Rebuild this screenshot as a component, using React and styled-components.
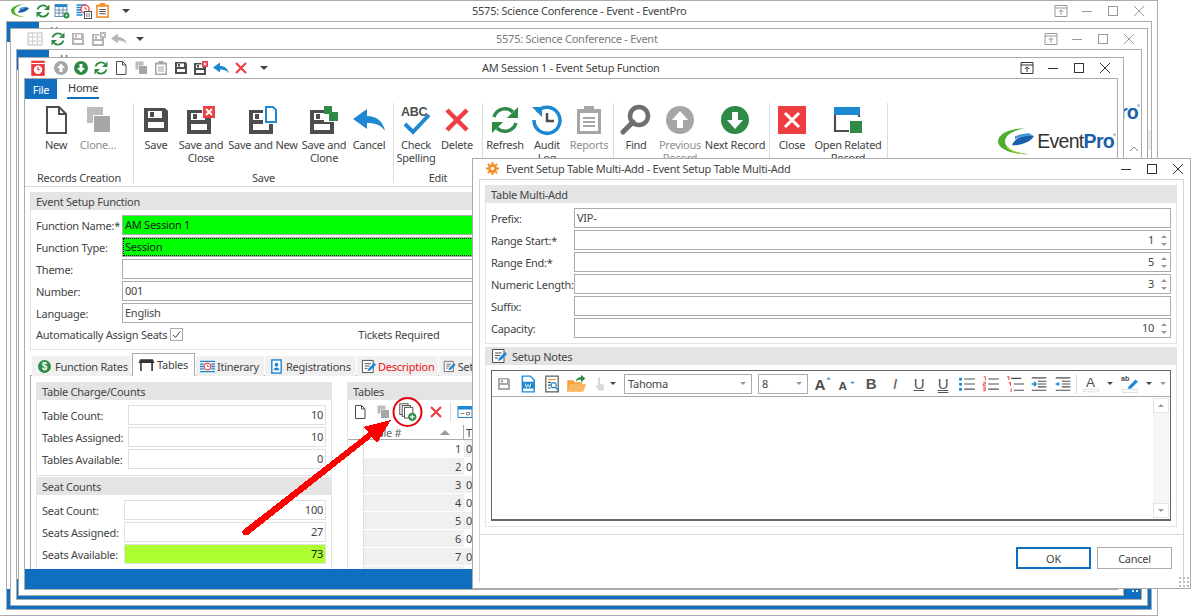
import React from 'react';
import styled, { createGlobalStyle } from 'styled-components';

const BLUE = '#106ebe';
const ICON_BLUE = '#1e88d2';
const GREEN = '#2e8b45';
const RED = '#ef3e42';
const DARK = '#4d4d4d';
const GREY = '#a6a6a6';

const GlobalStyle = createGlobalStyle`
    html, body {
        margin: 0;
        padding: 0;
        background: #fff;
        overflow: hidden;
    }
    body {
        font-family: "Noto Sans", "Open Sans", sans-serif;
        font-size: 11px;
        letter-spacing: -0.25px;
        color: #444;
    }
`;

const Desktop = styled.div`
    position: relative;
    width: 1191px;
    height: 616px;
    overflow: hidden;
    background: #fff;
`;

const Window = styled.section`
    position: absolute;
    left: ${(p) => p.$left}px;
    top: ${(p) => p.$top}px;
    width: ${(p) => p.$width}px;
    height: ${(p) => p.$height}px;
    box-sizing: border-box;
    display: flex;
    flex-direction: column;
    padding: 0 5px 5px ${(p) => p.$padLeft || 5}px;
    background: #fff;
    border: 1px solid #ababab;
`;

const TitleBar = styled.header`
    flex: none;
    box-sizing: border-box;
    height: 20px;
    padding-bottom: 1px;
    display: flex;
    align-items: center;
    color: ${(p) => (p.$dim ? '#7a7a7a' : '#444')};
`;

const Qat = styled.div`
    display: flex;
    align-items: center;
    margin-left: ${(p) => p.$pad}px;
`;

const QatSlot = styled.span`
    flex: none;
    width: 20px;
    height: 20px;
    display: flex;
    align-items: center;
    justify-content: center;
    margin-left: ${(p) => p.$ml || 0}px;
`;

const Caret = styled.span`
    flex: none;
    width: 0;
    height: 0;
    border-left: ${(p) => p.$size || 4}px solid transparent;
    border-right: ${(p) => p.$size || 4}px solid transparent;
    border-top: ${(p) => p.$size || 4}px solid ${(p) => p.$color || '#444'};
`;

const TitleText = styled.span`
    margin-left: ${(p) => p.$ml}px;
    white-space: nowrap;
`;

const WinButtons = styled.div`
    margin-left: auto;
    margin-right: ${(p) => p.$mr || 0}px;
    display: flex;
    align-items: center;
`;

const WinButton = styled.span`
    width: 26px;
    height: 20px;
    display: flex;
    align-items: center;
    justify-content: center;
`;

const Frame = styled.div`
    flex: 1;
    min-height: 0;
    display: flex;
    flex-direction: column;
    border: 1px solid #ababab;
    background: #fff;
`;

const TabStrip = styled.div`
    flex: none;
    height: 20px;
    display: flex;
    align-items: stretch;
`;

const FileTab = styled.span`
    width: 32px;
    display: flex;
    align-items: center;
    justify-content: center;
    background: ${BLUE};
    color: #fff;
`;

const HomeTab = styled.span`
    margin-left: 10px;
    padding: 0 1px;
    line-height: 18px;
    border-bottom: 2px solid ${BLUE};
    color: #333;
`;

const Ribbon = styled.div`
    flex: none;
    height: 87px;
    display: flex;
    border-bottom: 1px solid #dcdcdc;
`;

const BackRibbon = styled.div`
    flex: 1;
    min-height: 0;
    display: flex;
    flex-direction: column;
    align-items: flex-end;
`;

const RibbonGroup = styled.div`
    box-sizing: border-box;
    flex: none;
    width: ${(p) => p.$width}px;
    height: 80px;
    margin-top: 4px;
    padding-left: ${(p) => p.$pad}px;
    display: flex;
    flex-direction: column;
    border-right: 1px solid #dcdcdc;
`;

const RibbonItems = styled.div`
    flex: 1;
    min-height: 0;
    display: flex;
`;

const RibbonItem = styled.div`
    flex: none;
    width: ${(p) => p.$width}px;
    display: flex;
    flex-direction: column;
    align-items: center;
    color: ${(p) => (p.$off ? '#8f8f8f' : '#444')};
`;

const RibbonIcon = styled.span`
    height: 32px;
    margin-top: 1px;
`;

const RibbonLabel = styled.span`
    margin-top: 2px;
    text-align: center;
    line-height: 13px;
`;

const GroupLabel = styled.div`
    text-align: center;
    line-height: 14px;
    margin-bottom: -2px;
    margin-left: ${(p) => -p.$pad}px;
    color: #444;
`;

const LogoBox = styled.div`
    flex: none;
    align-self: flex-start;
    display: flex;
    align-items: center;
    margin: 29px 3px 0 auto;
`;

const LogoWord = styled.span`
    position: relative;
    margin-left: 3px;
    font-family: "Liberation Sans", sans-serif;
    font-size: 19.5px;
    letter-spacing: -0.7px;
    color: #333;
    b {
        color: #1b5fa8;
    }
    i {
        position: absolute;
        right: -2px;
        top: 3px;
        width: 3px;
        height: 3px;
        border-radius: 50%;
        background: #a9c3de;
    }
`;

const ChevronUp = styled.span`
    margin: 20px 2px 0 0;
    line-height: 0;
`;

const ScrollStub = styled.span`
    margin-top: 88px;
    width: 5px;
    height: 20px;
    background: #ececec;
`;

const Body = styled.main`
    flex: 1;
    min-height: 0;
    overflow: hidden;
    padding: 5px 0 0 5px;
`;

const StatusBar = styled.footer`
    flex: none;
    height: 20px;
    display: flex;
    align-items: center;
    justify-content: flex-end;
    padding-right: 2px;
    background: ${BLUE};
`;

const Grip = styled.span`
    width: 8px;
    height: 8px;
    background-image: radial-gradient(#dcebf7 1px, transparent 1.2px);
    background-size: 4px 4px;
`;

const Group = styled.div`
    box-sizing: border-box;
    border: 1px solid #e4e4e4;
    border-top: none;
    margin-bottom: ${(p) => p.$mb || 0}px;
    height: ${(p) => (p.$height ? `${p.$height}px` : 'auto')};
`;

const GroupHeader = styled.div`
    height: 18px;
    margin: 0 -1px;
    padding-left: 6px;
    display: flex;
    align-items: center;
    gap: 5px;
    background: #e4e4e4;
`;

const Rows = styled.div`
    display: flex;
    flex-direction: column;
    gap: 2px;
    padding: 5px ${(p) => p.$right || 5}px 5px 5px;
`;

const Row = styled.div`
    display: flex;
    align-items: center;
    height: 20px;
`;

const FieldLabel = styled.label`
    flex: none;
    width: ${(p) => p.$width}px;
    white-space: nowrap;
`;

const Field = styled.div`
    position: relative;
    flex: 1;
    min-width: 0;
    height: 20px;
    box-sizing: border-box;
    padding: 0 ${(p) => (p.$spin ? 16 : 2)}px 0 2px;
    line-height: 18px;
    white-space: nowrap;
    text-align: ${(p) => (p.$right ? 'right' : 'left')};
    border: 1px solid ${(p) => (p.$soft ? '#e0e0e0' : '#ababab')};
    background: ${(p) => p.$bg || '#fff'};
    color: ${(p) => (p.$bg ? '#1a1a1a' : '#444')};
    ${(p) => p.$focus && 'outline: 1px dotted #000; outline-offset: -2px;'}
`;

const SpinBox = styled.span`
    position: absolute;
    right: 3px;
    top: 4px;
    display: flex;
    flex-direction: column;
    gap: 5px;
`;

const SpinArrow = styled.span`
    width: 0;
    height: 0;
    border-left: 3.5px solid transparent;
    border-right: 3.5px solid transparent;
    ${(p) => (p.$up ? 'border-bottom' : 'border-top')}: 3.5px solid #999;
`;

const CheckRow = styled.div`
    height: 18px;
    display: flex;
    align-items: center;
`;

const CheckBox = styled.span`
    width: 13px;
    height: 13px;
    margin-left: 3px;
    box-sizing: border-box;
    border: 1px solid #ababab;
    display: flex;
    align-items: center;
    justify-content: center;
`;

const TicketsLabel = styled.span`
    margin-left: 175px;
`;

const Tabs = styled.div`
    display: flex;
    align-items: flex-end;
    height: 23px;
    margin: 3px 0 -1px 2px;
    position: relative;
`;

const Tab = styled.span`
    flex: none;
    box-sizing: border-box;
    width: ${(p) => p.$width}px;
    height: ${(p) => (p.$active ? 23 : 20)}px;
    margin-right: 1px;
    display: flex;
    align-items: center;
    gap: ${(p) => p.$gap || 2}px;
    padding-left: ${(p) => p.$pad || 3}px;
    white-space: nowrap;
    overflow: hidden;
    color: ${(p) => (p.$alert ? '#ee1111' : '#444')};
    background: ${(p) => (p.$active ? '#fff' : '#f0f0f0')};
    border: 1px solid ${(p) => (p.$active ? '#ababab' : 'transparent')};
    border-bottom-color: ${(p) => (p.$active ? '#fff' : 'transparent')};
`;

const TabBody = styled.div`
    display: flex;
    align-items: flex-start;
    gap: 15px;
    height: 300px;
    padding: 6px 0 0 5px;
    border-top: 1px solid #ababab;
    border-left: 1px solid #ababab;
`;

const CountColumn = styled.div`
    flex: none;
    width: 296px;
`;

const TablesPane = styled.div`
    flex: 1;
    min-width: 0;
    border-left: 1px solid #e4e4e4;
`;

const GridTools = styled.div`
    box-sizing: border-box;
    height: 25px;
    display: flex;
    align-items: center;
    padding: 0 0 2px 1px;
`;

const ToolSlot = styled.span`
    flex: none;
    width: ${(p) => p.$width || 24}px;
    margin-left: ${(p) => p.$ml || 0}px;
    display: flex;
    align-items: center;
    justify-content: center;
    line-height: 0;
`;

const ToolDivider = styled.span`
    flex: none;
    width: 1px;
    height: 20px;
    margin: 0 ${(p) => p.$gap || 2}px;
    background: #dcdcdc;
`;

const GridRow = styled.div`
    display: flex;
    height: ${(p) => (p.$head ? 15 : 18)}px;
    line-height: ${(p) => (p.$head ? 15 : 17)}px;
    box-sizing: border-box;
    border-bottom: 1px solid ${(p) => (p.$head ? '#ababab' : '#fff')};
`;

const GridMark = styled.span`
    flex: none;
    width: 15px;
    display: flex;
    align-items: center;
    justify-content: center;
    border-right: 1px solid #dcdcdc;
`;

const RowPointer = styled.span`
    width: 0;
    height: 0;
    border-top: 3px solid transparent;
    border-bottom: 3px solid transparent;
    border-left: 3px solid #aaa;
`;

const NumberCell = styled.span`
    flex: none;
    width: 100px;
    box-sizing: border-box;
    padding-right: 3px;
    text-align: right;
    background: ${(p) => (p.$tint ? '#f0f0f0' : '#fff')};
`;

const HeadCell = styled.span`
    flex: none;
    width: 100px;
    box-sizing: border-box;
    padding: 0 13px 0 2px;
    display: flex;
    align-items: center;
    justify-content: space-between;
    border-right: 1px solid #ababab;
    color: #666;
`;

const SortMark = styled.span`
    width: 0;
    height: 0;
    border-left: 5px solid transparent;
    border-right: 5px solid transparent;
    border-bottom: 5px solid #999;
`;

const TextCell = styled.span`
    flex: 1;
    padding-left: 2px;
    background: ${(p) => (p.$tint ? '#f0f0f0' : '#fff')};
`;

const Dialog = styled(Window)`
    padding: 0 6px 6px;
`;

const DialogTitle = styled.span`
    margin-left: 7px;
    display: flex;
    align-items: center;
    gap: 7px;
    color: #444;
`;

const DialogFrame = styled.div`
    flex: 1;
    min-height: 0;
    display: flex;
    flex-direction: column;
    border: 1px solid #d4d4d4;
    border-bottom: none;
`;

const DialogBody = styled.div`
    flex: none;
    height: 355px;
    box-sizing: border-box;
    padding: 5px 6px 0 5px;
    border-bottom: 1px solid #dcdcdc;
`;

const NotesEditor = styled.div`
    box-sizing: border-box;
    margin: 5px 5px 0;
    height: 151px;
    border: 1px solid #666;
    border-bottom-width: 2px;
    display: flex;
    flex-direction: column;
`;

const NotesTools = styled.div`
    flex: none;
    height: 25px;
    display: flex;
    align-items: center;
    border-bottom: 1px solid #ababab;
`;

const Combo = styled.span`
    flex: none;
    box-sizing: border-box;
    width: ${(p) => p.$width}px;
    height: 20px;
    margin-left: ${(p) => p.$ml || 0}px;
    padding: 0 5px 0 3px;
    display: flex;
    align-items: center;
    justify-content: space-between;
    border: 1px solid #ababab;
`;

const ToolGlyph = styled.span`
    font-family: "Liberation Sans", sans-serif;
    font-size: ${(p) => p.$size || 15}px;
    line-height: 16px;
    font-weight: ${(p) => (p.$bold ? 700 : 400)};
    font-style: ${(p) => (p.$italic ? 'italic' : 'normal')};
    text-decoration: ${(p) => p.$line || 'none'};
    color: #555;
`;

const NotesArea = styled.div`
    flex: 1;
    min-height: 0;
    display: flex;
    justify-content: flex-end;
    padding: 1px 1px 1px 0;
`;

const NotesScroll = styled.div`
    width: 16px;
    display: flex;
    flex-direction: column;
    justify-content: space-between;
    background: #f6f6f6;
`;

const ScrollButton = styled.span`
    box-sizing: border-box;
    height: 15px;
    display: flex;
    align-items: center;
    justify-content: center;
    background: #fff;
    border: 1px solid #e4e4e4;
`;

const DialogFooter = styled.div`
    flex: 1;
    display: flex;
    align-items: flex-start;
    justify-content: flex-end;
    gap: 6px;
    padding: 12px 11px 0 0;
`;

const DialogButton = styled.button`
    width: 75px;
    height: 22px;
    padding: 0;
    font: inherit;
    letter-spacing: inherit;
    color: #444;
    background: #fff;
    border: ${(p) => (p.$primary ? `2px solid ${BLUE}` : '1px solid #ababab')};
`;

const ResizeGrip = styled.span`
    position: absolute;
    right: 1px;
    bottom: 1px;
    width: 11px;
    height: 11px;
    background-image: radial-gradient(#bdbdbd 1px, transparent 1.2px);
    background-size: 4px 4px;
`;

const Overlay = styled.svg`
    position: absolute;
    left: 0;
    top: 0;
    pointer-events: none;
`;

/* icons, all drawn on a 32 box */
const Ico = ({ s = 32, children }) => (
    <svg width={s} height={s} viewBox="0 0 32 32" style={{ display: 'block' }}>
        {children}
    </svg>
);

const Floppy = ({ x = 0, y = 0, c = DARK }) => (
    <g transform={`translate(${x} ${y})`}>
        <path fill={c} d="M4 4h21l3 3v21H4z" />
        <rect x="8" y="7" width="14" height="7" fill="#fff" />
        <rect x="10" y="8" width="4" height="5" fill={c} />
        <rect x="8" y="18" width="16" height="6" fill="#fff" />
    </g>
);

const SaveIcon = ({ s, c }) => <Ico s={s}><Floppy c={c} /></Ico>;

const SaveCloseIcon = ({ s, c = DARK, r = RED }) => (
    <Ico s={s}>
        <Floppy x={-2} y={2} c={c} />
        <rect x="17" y="1" width="14" height="13" fill="#fff" />
        <rect x="18" y="2" width="12" height="12" fill={r} />
        <path d="M21 5l6 6M27 5l-6 6" stroke="#fff" strokeWidth="2" />
    </Ico>
);

const SaveNewIcon = () => (
    <Ico>
        <Floppy x={-2} y={2} />
        <rect x="16" y="1" width="15" height="19" fill="#fff" />
        <path d="M19 3h7l3 3v12H19z" fill="#fff" stroke={ICON_BLUE} strokeWidth="2" />
    </Ico>
);

const SaveCloneIcon = () => (
    <Ico>
        <Floppy x={-2} y={2} />
        <rect x="16" y="0" width="16" height="18" fill="#fff" />
        <rect x="16" y="2" width="8" height="8" fill={GREEN} />
        <rect x="21" y="8" width="9" height="9" fill={GREEN} />
    </Ico>
);

const NewIcon = ({ s }) => (
    <Ico s={s}>
        <path d="M7 3h12l7 7v19H7z" fill="#fff" stroke={DARK} strokeWidth="2" />
        <path d="M19 3v7h7" fill="none" stroke={DARK} strokeWidth="2" />
    </Ico>
);

const CloneIcon = ({ s }) => (
    <Ico s={s}>
        <rect x="5" y="3" width="16" height="16" fill="#bcbcbc" />
        <rect x="11" y="11" width="16" height="16" fill="#fff" />
        <rect x="12" y="12" width="16" height="16" fill={GREY} />
    </Ico>
);

const UndoIcon = ({ s, c = ICON_BLUE }) => (
    <Ico s={s}>
        <path fill={c} d="M0 15L14 5v7c9 0 16 5 18 15-4-6-9-8-18-8v6z" />
    </Ico>
);

const CrossIcon = ({ s }) => (
    <Ico s={s}>
        <path d="M6 6l20 20M26 6L6 26" stroke={RED} strokeWidth="4.5" />
    </Ico>
);

const RefreshIcon = ({ s }) => (
    <Ico s={s}>
        <path d="M5 13A11.5 11.5 0 0 1 24 8" fill="none" stroke={GREEN} strokeWidth="3.5" />
        <path d="M29 3v11H18z" fill={GREEN} />
        <path d="M27 19A11.5 11.5 0 0 1 8 24" fill="none" stroke={GREEN} strokeWidth="3.5" />
        <path d="M3 29V18h11z" fill={GREEN} />
    </Ico>
);

const AuditIcon = () => (
    <Ico>
        <path d="M6 8A13 13 0 1 1 3 16" fill="none" stroke={ICON_BLUE} strokeWidth="3.5" />
        <path d="M1 3h10v10z" fill={ICON_BLUE} />
        <path d="M16 9v8h7" fill="none" stroke={DARK} strokeWidth="2.5" />
    </Ico>
);

const ClipboardIcon = ({ s, c = GREY, inner = '#fff', lines = '#fff' }) => (
    <Ico s={s}>
        <rect x="4" y="5" width="24" height="25" fill={c} />
        <rect x="7" y="9" width="18" height="18" fill={inner} />
        <rect x="11" y="2" width="10" height="6" fill={c} />
        <path d="M10 14h12M10 18h12M10 22h12" stroke={lines === '#fff' ? c : lines} strokeWidth="2" />
    </Ico>
);

const FindIcon = () => (
    <Ico>
        <circle cx="19" cy="12" r="9" fill="none" stroke="#6f6f6f" strokeWidth="4.5" />
        <path d="M13 18L3 28" stroke="#6f6f6f" strokeWidth="5" strokeLinecap="round" />
    </Ico>
);

const ArrowDisc = ({ s, c, down }) => (
    <Ico s={s}>
        <circle cx="16" cy="16" r="14" fill={c} />
        <path
            fill="#fff"
            d={down ? 'M13 8h6v8h5l-8 9-8-9h5z' : 'M13 24h6v-8h5l-8-9-8 9h5z'}
        />
    </Ico>
);

const CloseIcon = () => (
    <Ico>
        <rect x="2" y="2" width="28" height="28" fill={RED} />
        <path d="M9 9l14 14M23 9L9 23" stroke="#fff" strokeWidth="3" />
    </Ico>
);

const OpenRelatedIcon = () => (
    <Ico>
        <rect x="2" y="3" width="26" height="8" fill={ICON_BLUE} />
        <path d="M3 11v16h14M27 11v2" fill="none" stroke={DARK} strokeWidth="2.2" />
        <rect x="18" y="17" width="12" height="12" fill={GREEN} />
    </Ico>
);

const SpellIcon = () => (
    <Ico>
        <text x="1" y="12" fontFamily="Liberation Sans" fontWeight="700" fontSize="12.5" fill={DARK}>ABC</text>
        <path d="M5 20l8 8L29 11" fill="none" stroke={ICON_BLUE} strokeWidth="4" />
    </Ico>
);

const Swoosh = ({ w = 36 }) => (
    <svg width={w} height={w * 0.74} viewBox="0 0 36 26" style={{ display: 'block' }}>
        <path fill="#4fae2e" d="M27 0C11 0 0 6 0 13c0 7 11 13 31 13C17 25 7 20 7 13 7 7 15 2 27 0z" />
        <path fill="#9ed23c" d="M8 17c4 5 12 8 23 9-9 0-17-2-21-5z" />
        <path fill="#1b5fa8" d="M14 17c2-6 9-11 22-9-3 5-11 9-22 9z" />
        <path fill="#3f93d6" d="M17 8c5-2 10-3 14-3l5 3c-7-1-13 0-19 3z" />
    </svg>
);

const Logo = () => (
    <LogoBox>
        <Swoosh />
        <LogoWord>
            Event<b>Pro</b>
            <i />
        </LogoWord>
    </LogoBox>
);

const PinIcon = ({ c }) => (
    <svg width="14" height="14" viewBox="0 0 14 14">
        <path d="M1 1.5h12v11H1zM1 4h12" fill="none" stroke={c} />
        <path d="M7 11V6M4.8 8L7 5.8 9.2 8" fill="none" stroke={c} />
    </svg>
);

const MinIcon = ({ c }) => (
    <svg width="14" height="14" viewBox="0 0 14 14"><path d="M2 7.5h10" stroke={c} /></svg>
);

const MaxIcon = ({ c }) => (
    <svg width="14" height="14" viewBox="0 0 14 14"><rect x="2.5" y="2.5" width="9" height="9" fill="none" stroke={c} /></svg>
);

const ShutIcon = ({ c }) => (
    <svg width="14" height="14" viewBox="0 0 14 14"><path d="M2 2l10 10M12 2L2 12" stroke={c} /></svg>
);

const GearIcon = () => (
    <svg width="13" height="13" viewBox="0 0 16 16">
        <circle cx="8" cy="8" r="5.5" fill="#f58f2a" />
        <path d="M8 0v16M0 8h16M2.3 2.3l11.4 11.4M13.7 2.3L2.3 13.7" stroke="#f58f2a" strokeWidth="2.4" />
        <circle cx="8" cy="8" r="2.2" fill="#fff" />
    </svg>
);

const GridGearIcon = ({ c = '#6f8fae' }) => (
    <Ico s={16}>
        <rect x="2" y="3" width="24" height="24" fill="#fff" stroke={c} strokeWidth="2" />
        <rect x="2" y="3" width="24" height="5" fill={ICON_BLUE} />
        <path d="M10 8v18M18 8v18M2 14h24M2 20h24" stroke={c} strokeWidth="2" />
        <circle cx="25" cy="25" r="6" fill={GREEN} />
        <circle cx="25" cy="25" r="2" fill="#fff" />
    </Ico>
);

const GreyTableIcon = () => (
    <Ico s={16}>
        <rect x="2" y="4" width="28" height="24" fill="#fafafa" stroke="#bdbdbd" strokeWidth="2" />
        <path d="M11 4v24M21 4v24M2 12h28M2 20h28" stroke="#d0d0d0" strokeWidth="2" />
    </Ico>
);

const ScheduleIcon = () => (
    <Ico s={16}>
        <path d="M1 4h20M1 9h12M1 14h10M1 19h10M1 24h12" stroke={ICON_BLUE} strokeWidth="3" />
        <circle cx="18" cy="12" r="8" fill="#fff" stroke={RED} strokeWidth="2.5" />
        <path d="M18 8v4h4" fill="none" stroke={RED} strokeWidth="2" />
        <rect x="17" y="17" width="14" height="14" fill="#fff" stroke={DARK} strokeWidth="2" />
        <path d="M20 22h3M25 22h3M20 26h3M25 26h3" stroke={DARK} strokeWidth="2" />
    </Ico>
);

const AlarmIcon = () => (
    <Ico s={18}>
        <rect x="4" y="3" width="24" height="27" fill="#e8383d" />
        <rect x="4" y="7" width="24" height="2" fill="#fff" />
        <circle cx="16" cy="19" r="7.5" fill="#fff" />
        <path d="M16 14v5h4" fill="none" stroke="#e8383d" strokeWidth="2" />
    </Ico>
);

const DollarDisc = styled.span`
    width: 13px;
    height: 13px;
    border-radius: 50%;
    background: ${GREEN};
    color: #fff;
    font-family: "Liberation Sans", sans-serif;
    font-size: 10px;
    font-weight: 700;
    line-height: 13px;
    text-align: center;
`;

const TableIcon = () => (
    <Ico s={17}>
        <path d="M4 6h24l3 7h-3v15h-3V13H7v15H4V13H1z" fill="#333" />
    </Ico>
);

const ItineraryIcon = () => (
    <Ico s={15}>
        <path d="M0 5h32M0 11h8M0 16h8M0 21h8M0 27h32M24 11h8M24 16h8M24 21h8" stroke={ICON_BLUE} strokeWidth="3" />
        <circle cx="16" cy="16" r="7" fill="#fff" stroke={RED} strokeWidth="2.2" />
        <path d="M16 12v4h4" fill="none" stroke={RED} strokeWidth="1.8" />
    </Ico>
);

const BadgeIcon = () => (
    <Ico s={15}>
        <rect x="6" y="2" width="20" height="28" fill="#fff" stroke={ICON_BLUE} strokeWidth="3" />
        <circle cx="16" cy="12" r="4" fill={ICON_BLUE} />
        <path d="M10 24c0-8 12-8 12 0z" fill={ICON_BLUE} />
    </Ico>
);

const NoteIcon = ({ s = 15 }) => (
    <Ico s={s}>
        <path d="M3 3h23v26H3z" fill="#fff" stroke={DARK} strokeWidth="2" />
        <path d="M8 10h13M8 15h10M8 20h6" stroke={DARK} strokeWidth="2" />
        <path d="M14 26l2-6 12-12 4 4-12 12z" fill={ICON_BLUE} />
    </Ico>
);

const MultiAddIcon = () => (
    <Ico s={19}>
        <rect x="3" y="3" width="14" height="18" fill="#fff" stroke={DARK} strokeWidth="1.6" />
        <rect x="7" y="6" width="14" height="18" fill="#fff" stroke={DARK} strokeWidth="1.6" />
        <rect x="11" y="9" width="14" height="18" fill="#fff" stroke={DARK} strokeWidth="1.6" />
        <circle cx="24" cy="25" r="7" fill={GREEN} />
        <path d="M24 21v8M20 25h8" stroke="#fff" strokeWidth="2" />
    </Ico>
);

const PanelIcon = () => (
    <Ico s={16}>
        <rect x="2" y="5" width="28" height="22" fill="#fff" stroke={ICON_BLUE} strokeWidth="2" />
        <rect x="2" y="5" width="28" height="6" fill={ICON_BLUE} />
        <path d="M7 19h8M19 17h6v5h-6z" fill="none" stroke="#888" strokeWidth="2" />
    </Ico>
);

const WordIcon = () => (
    <Ico s={18}>
        <path d="M6 2h14l7 7v21H6z" fill="#fff" stroke={ICON_BLUE} strokeWidth="2.5" />
        <rect x="6" y="12" width="21" height="12" fill={ICON_BLUE} />
        <path d="M11 15l2 7 3-5 3 5 2-7" fill="none" stroke="#fff" strokeWidth="1.5" />
    </Ico>
);

const PreviewIcon = () => (
    <Ico s={18}>
        <rect x="5" y="2" width="22" height="28" fill="#fff" stroke={DARK} strokeWidth="2" />
        <path d="M9 8h14" stroke="#f58f2a" strokeWidth="2" />
        <path d="M9 13h5M9 18h5M9 23h5" stroke={DARK} strokeWidth="2" />
        <circle cx="19" cy="18" r="4.5" fill="#fff" stroke={ICON_BLUE} strokeWidth="2" />
        <path d="M22 22l6 6" stroke={ICON_BLUE} strokeWidth="2.5" />
    </Ico>
);

const FolderIcon = () => (
    <Ico s={20}>
        <path d="M2 10h10l2 3h12v15H2z" fill="#f5a23c" />
        <path d="M6 16h26l-4 12H2z" fill="#f8b961" />
        <path d="M16 12c0-5 4-7 8-7V1l7 6-7 6V9c-4 0-6 0-8 3z" fill={GREEN} />
    </Ico>
);

const HandIcon = () => (
    <Ico s={16}>
        <path d="M12 3h4v12l8 3-1 11H13L7 19l3-1 2 3z" fill="#d8d8d8" />
    </Ico>
);

const ListIcon = ({ kind }) => (
    <Ico s={18}>
        {kind === 'bullet' && (
            <>
                <rect x="2" y="5" width="5" height="5" fill={ICON_BLUE} />
                <rect x="2" y="14" width="5" height="5" fill={ICON_BLUE} />
                <rect x="2" y="23" width="5" height="5" fill={ICON_BLUE} />
            </>
        )}
        {kind === 'number' && <path d="M3 3h3v7M2 13h4v3H2v3h5M2 22h4v3H2M6 25v3H2" fill="none" stroke={RED} strokeWidth="1.6" />}
        {kind === 'multi' && <path d="M2 3h3v6M5 14h3v5M9 24v6" fill="none" stroke={RED} strokeWidth="1.8" />}
        {kind === 'multi' ? (
            <path d="M9 6h18M14 16h18M14 27h18" stroke={DARK} strokeWidth="2" />
        ) : (
            <path d="M11 7h19M11 16h19M11 25h19" stroke={DARK} strokeWidth="2" />
        )}
    </Ico>
);

const IndentIcon = ({ flip }) => (
    <Ico s={18}>
        <path d="M3 5h26M14 11h15M14 16h15M14 21h15M3 27h26" stroke={DARK} strokeWidth="2" />
        <path d={flip ? 'M3 16h7M7 13v6' : 'M3 16h8M7 12l4 4-4 4'} fill="none" stroke={ICON_BLUE} strokeWidth="2.4" />
    </Ico>
);

const HighlightIcon = () => (
    <Ico s={18}>
        <text x="0" y="11" fontFamily="Liberation Sans" fontWeight="700" fontSize="13" fill={DARK}>ab</text>
        <path d="M14 20L26 8l4 4-12 12-6 1z" fill={ICON_BLUE} />
        <rect x="3" y="26" width="26" height="5" fill="#fff" stroke="#c8c8c8" />
    </Ico>
);

const ColorAIcon = () => (
    <Ico s={18}>
        <text x="7" y="21" fontFamily="Liberation Sans" fontSize="24" fill={DARK}>A</text>
        <rect x="3" y="25" width="26" height="5" fill="#fff" stroke="#c8c8c8" />
    </Ico>
);

const FontStep = ({ up }) => (
    <Ico s={18}>
        <text x="1" y="27" fontFamily="Liberation Sans" fontWeight="700" fontSize={up ? 27 : 21} fill={DARK}>A</text>
        <path d={up ? 'M22 8l4-4 4 4z' : 'M22 12l4 4 4-4z'} fill={ICON_BLUE} />
    </Ico>
);

const WindowControls = ({ c, pin = true, mr }) => (
    <WinButtons $mr={mr}>
        {pin && <WinButton><PinIcon c={c} /></WinButton>}
        <WinButton><MinIcon c={c} /></WinButton>
        <WinButton><MaxIcon c={c} /></WinButton>
        <WinButton><ShutIcon c={c} /></WinButton>
    </WinButtons>
);

const ribbonGroups = [
    {
        label: 'Records Creation', width: 109, pad: 10,
        items: [
            { w: 42, label: 'New', icon: <NewIcon /> },
            { w: 42, label: 'Clone...', off: true, icon: <CloneIcon /> },
        ],
    },
    {
        label: 'Save', width: 260, pad: 4,
        items: [
            { w: 36, label: 'Save', icon: <SaveIcon /> },
            { w: 54, label: 'Save and Close', icon: <SaveCloseIcon /> },
            { w: 70, label: 'Save and New', icon: <SaveNewIcon /> },
            { w: 52, label: 'Save and Clone', icon: <SaveCloneIcon /> },
            { w: 38, label: 'Cancel', icon: <UndoIcon /> },
        ],
    },
    {
        label: 'Edit', width: 89, pad: 2,
        items: [
            { w: 40, label: 'Check Spelling', icon: <SpellIcon /> },
            { w: 42, label: 'Delete', icon: <CrossIcon /> },
        ],
    },
    {
        label: '', width: 131, pad: 1,
        items: [
            { w: 42, label: 'Refresh', icon: <RefreshIcon /> },
            { w: 42, label: 'Audit Log', icon: <AuditIcon /> },
            { w: 42, label: 'Reports', off: true, icon: <ClipboardIcon /> },
        ],
    },
    {
        label: '', width: 156, pad: 2,
        items: [
            { w: 40, label: 'Find', icon: <FindIcon /> },
            { w: 48, label: 'Previous Record', off: true, icon: <ArrowDisc c={GREY} /> },
            { w: 62, label: 'Next Record', icon: <ArrowDisc c={GREEN} down /> },
        ],
    },
    {
        label: '', width: 118, pad: 4,
        items: [
            { w: 36, label: 'Close', icon: <CloseIcon /> },
            { w: 76, label: 'Open Related Record', icon: <OpenRelatedIcon /> },
        ],
    },
];

const formFields = [
    { label: 'Function Name:*', value: 'AM Session 1', bg: '#00ff00' },
    { label: 'Function Type:', value: 'Session', bg: '#00ff00', focus: true },
    { label: 'Theme:', value: '' },
    { label: 'Number:', value: '001' },
    { label: 'Language:', value: 'English' },
];

const multiAddFields = [
    { label: 'Prefix:', value: 'VIP-' },
    { label: 'Range Start:*', value: '1', spin: true },
    { label: 'Range End:*', value: '5', spin: true },
    { label: 'Numeric Length:', value: '3', spin: true },
    { label: 'Suffix:', value: '' },
    { label: 'Capacity:', value: '10', spin: true },
];

const tableCounts = [
    { label: 'Table Count:', value: '10' },
    { label: 'Tables Assigned:', value: '10' },
    { label: 'Tables Available:', value: '0' },
];

const seatCounts = [
    { label: 'Seat Count:', value: '100' },
    { label: 'Seats Assigned:', value: '27' },
    { label: 'Seats Available:', value: '73', bg: '#adff2f' },
];

const tableRows = [1, 2, 3, 4, 5, 6, 7, 8];

function CountGroup({ title, rows, labelWidth, height, mb }) {
    return (
        <Group $height={height} $mb={mb}>
            <GroupHeader>{title}</GroupHeader>
            <Rows>
                {rows.map((r) => (
                    <Row key={r.label}>
                        <FieldLabel $width={labelWidth}>{r.label}</FieldLabel>
                        <Field $soft $right $bg={r.bg}>{r.value}</Field>
                    </Row>
                ))}
            </Rows>
        </Group>
    );
}

function FunctionWindow() {
    return (
        <Window $left={18} $top={57} $width={1106} $height={539}>
            <TitleBar>
                <Qat $pad={4}>
                    <QatSlot><AlarmIcon /></QatSlot>
                    <QatSlot $ml={3}><ArrowDisc s={16} c={GREY} /></QatSlot>
                    <QatSlot><ArrowDisc s={16} c={GREEN} down /></QatSlot>
                    <QatSlot><RefreshIcon s={16} /></QatSlot>
                    <QatSlot><NewIcon s={16} /></QatSlot>
                    <QatSlot><CloneIcon s={16} /></QatSlot>
                    <QatSlot><ClipboardIcon s={16} /></QatSlot>
                    <QatSlot><SaveIcon s={16} /></QatSlot>
                    <QatSlot><SaveCloseIcon s={16} /></QatSlot>
                    <QatSlot><UndoIcon s={16} /></QatSlot>
                    <QatSlot><CrossIcon s={16} /></QatSlot>
                    <QatSlot $ml={3}><Caret /></QatSlot>
                </Qat>
                <TitleText $ml={208}>AM Session 1 - Event Setup Function</TitleText>
                <WindowControls c="#333" />
            </TitleBar>
            <Frame>
                <TabStrip>
                    <FileTab>File</FileTab>
                    <HomeTab>Home</HomeTab>
                </TabStrip>
                <Ribbon>
                    {ribbonGroups.map((g, i) => (
                        <RibbonGroup key={i} $width={g.width} $pad={g.pad}>
                            <RibbonItems>
                                {g.items.map((it) => (
                                    <RibbonItem key={it.label} $width={it.w} $off={it.off}>
                                        <RibbonIcon>{it.icon}</RibbonIcon>
                                        <RibbonLabel>{it.label}</RibbonLabel>
                                    </RibbonItem>
                                ))}
                            </RibbonItems>
                            <GroupLabel $pad={g.pad}>{g.label}</GroupLabel>
                        </RibbonGroup>
                    ))}
                    <Logo />
                </Ribbon>
                <Body>
                    <Group $height={158}>
                        <GroupHeader>Event Setup Function</GroupHeader>
                        <Rows $right={12}>
                            {formFields.map((f) => (
                                <Row key={f.label}>
                                    <FieldLabel $width={86}>{f.label}</FieldLabel>
                                    <Field $bg={f.bg} $focus={f.focus}>{f.value}</Field>
                                </Row>
                            ))}
                            <CheckRow>
                                Automatically Assign Seats
                                <CheckBox>
                                    <svg width="9" height="9" viewBox="0 0 9 9">
                                        <path d="M1 5l2.5 2.5L8 1.5" fill="none" stroke="#444" />
                                    </svg>
                                </CheckBox>
                                <TicketsLabel>Tickets Required</TicketsLabel>
                            </CheckRow>
                        </Rows>
                    </Group>
                    <Tabs>
                        <Tab $width={99} $pad={5} $gap={4}><DollarDisc>$</DollarDisc>Function Rates</Tab>
                        <Tab $width={63} $pad={5} $active><TableIcon />Tables</Tab>
                        <Tab $width={68}><ItineraryIcon />Itinerary</Tab>
                        <Tab $width={91}><BadgeIcon />Registrations</Tab>
                        <Tab $width={81} $alert><NoteIcon />Description</Tab>
                        <Tab $width={80}><NoteIcon />Setup Notes</Tab>
                    </Tabs>
                    <TabBody>
                        <CountColumn>
                            <CountGroup title="Table Charge/Counts" rows={tableCounts} labelWidth={86} height={94} mb={1} />
                            <CountGroup title="Seat Counts" rows={seatCounts} labelWidth={82} />
                        </CountColumn>
                        <TablesPane>
                            <GroupHeader>Tables</GroupHeader>
                            <GridTools>
                                <ToolSlot $width={22}><NewIcon s={16} /></ToolSlot>
                                <ToolSlot><CloneIcon s={16} /></ToolSlot>
                                <ToolSlot><MultiAddIcon /></ToolSlot>
                                <ToolSlot $ml={5}><CrossIcon s={16} /></ToolSlot>
                                <ToolDivider />
                                <ToolSlot><PanelIcon /></ToolSlot>
                            </GridTools>
                            <GridRow $head>
                                <GridMark />
                                <HeadCell>Table #<SortMark /></HeadCell>
                                <TextCell>T</TextCell>
                            </GridRow>
                            {tableRows.map((n) => (
                                <GridRow key={n}>
                                    <GridMark>{n === 1 && <RowPointer />}</GridMark>
                                    <NumberCell $tint={n > 1}>{n < 8 && n}</NumberCell>
                                    <TextCell $tint={n % 2 === 1}>{n < 8 && '0'}</TextCell>
                                </GridRow>
                            ))}
                        </TablesPane>
                    </TabBody>
                </Body>
                <StatusBar />
            </Frame>
        </Window>
    );
}

function MultiAddDialog() {
    return (
        <Dialog $left={472} $top={158} $width={719} $height={431}>
            <TitleBar>
                <DialogTitle><GearIcon />Event Setup Table Multi-Add - Event Setup Table Multi-Add</DialogTitle>
                <WindowControls c="#333" pin={false} mr={-7} />
            </TitleBar>
            <DialogFrame>
                <DialogBody>
                    <Group $mb={3}>
                        <GroupHeader>Table Multi-Add</GroupHeader>
                        <Rows>
                            {multiAddFields.map((f) => (
                                <Row key={f.label}>
                                    <FieldLabel $width={83}>{f.label}</FieldLabel>
                                    <Field $right={f.spin} $spin={f.spin}>
                                        {f.value}
                                        {f.spin && <SpinBox><SpinArrow $up /><SpinArrow /></SpinBox>}
                                    </Field>
                                </Row>
                            ))}
                        </Rows>
                    </Group>
                    <Group $height={180}>
                        <GroupHeader><NoteIcon s={16} />Setup Notes</GroupHeader>
                        <NotesEditor>
                            <NotesTools>
                                <ToolSlot><SaveIcon s={16} c="#a8a8a8" /></ToolSlot>
                                <ToolSlot><WordIcon /></ToolSlot>
                                <ToolSlot><PreviewIcon /></ToolSlot>
                                <ToolSlot><FolderIcon /></ToolSlot>
                                <ToolSlot><HandIcon /></ToolSlot>
                                <ToolSlot $width={12} $ml={-5}><Caret $size={3.5} /></ToolSlot>
                                <Combo $width={128} $ml={5}>Tahoma<Caret $size={3.5} $color="#999" /></Combo>
                                <Combo $width={50} $ml={6}>8<Caret $size={3.5} $color="#999" /></Combo>
                                <ToolSlot $ml={3}><FontStep up /></ToolSlot>
                                <ToolSlot><FontStep /></ToolSlot>
                                <ToolSlot><ToolGlyph $bold>B</ToolGlyph></ToolSlot>
                                <ToolSlot><ToolGlyph $italic>I</ToolGlyph></ToolSlot>
                                <ToolSlot><ToolGlyph $line="underline">U</ToolGlyph></ToolSlot>
                                <ToolSlot><ToolGlyph $line="underline double">U</ToolGlyph></ToolSlot>
                                <ToolSlot><ListIcon kind="bullet" /></ToolSlot>
                                <ToolSlot><ListIcon kind="number" /></ToolSlot>
                                <ToolSlot><ListIcon kind="multi" /></ToolSlot>
                                <ToolSlot><IndentIcon /></ToolSlot>
                                <ToolSlot><IndentIcon flip /></ToolSlot>
                                <ToolDivider $gap={1} />
                                <ToolSlot $ml={1}><ColorAIcon /></ToolSlot>
                                <ToolSlot $width={14}><Caret $size={3.5} /></ToolSlot>
                                <ToolSlot $width={26}><HighlightIcon /></ToolSlot>
                                <ToolSlot $width={12}><Caret $size={3.5} /></ToolSlot>
                                <ToolSlot $width={12} $ml={2}><Caret $size={3.5} $color="#999" /></ToolSlot>
                            </NotesTools>
                            <NotesArea>
                                <NotesScroll>
                                    <ScrollButton><SpinArrow $up /></ScrollButton>
                                    <ScrollButton><SpinArrow /></ScrollButton>
                                </NotesScroll>
                            </NotesArea>
                        </NotesEditor>
                    </Group>
                </DialogBody>
                <DialogFooter>
                    <DialogButton $primary>OK</DialogButton>
                    <DialogButton>Cancel</DialogButton>
                </DialogFooter>
            </DialogFrame>
            <ResizeGrip />
        </Dialog>
    );
}

export default function App() {
    return (
        <Desktop>
            <GlobalStyle />
            <Window $left={-1} $top={0} $width={1159} $height={616} $padLeft={6}>
                <TitleBar>
                    <Qat $pad={4}>
                        <QatSlot><Swoosh w={18} /></QatSlot>
                        <QatSlot $ml={3}><RefreshIcon s={16} /></QatSlot>
                        <QatSlot $ml={-1}><GridGearIcon /></QatSlot>
                        <QatSlot $ml={2}><ScheduleIcon /></QatSlot>
                        <QatSlot $ml={-2}><ClipboardIcon s={17} c="#f58f2a" lines={DARK} /></QatSlot>
                        <QatSlot $ml={4}><Caret /></QatSlot>
                    </Qat>
                    <TitleText $ml={336}>5575: Science Conference - Event - EventPro</TitleText>
                    <WindowControls c="#999" />
                </TitleBar>
                <Frame>
                    <TabStrip>
                        <FileTab>File</FileTab>
                        <HomeTab>Home</HomeTab>
                    </TabStrip>
                    <BackRibbon><ScrollStub /></BackRibbon>
                    <StatusBar />
                </Frame>
            </Window>
            <Window $left={10} $top={28} $width={1138} $height={578}>
                <TitleBar $dim>
                    <Qat $pad={9}>
                        <QatSlot><GreyTableIcon /></QatSlot>
                        <QatSlot $ml={3}><RefreshIcon s={16} /></QatSlot>
                        <QatSlot><SaveIcon s={16} c="#b5b5b5" /></QatSlot>
                        <QatSlot $ml={1}><SaveCloseIcon s={16} c="#b5b5b5" r="#b5b5b5" /></QatSlot>
                        <QatSlot><UndoIcon s={16} c="#b5b5b5" /></QatSlot>
                        <QatSlot $ml={1}><Caret /></QatSlot>
                    </Qat>
                    <TitleText $ml={346}>5575: Science Conference - Event</TitleText>
                    <WindowControls c="#999" />
                </TitleBar>
                <Frame>
                    <TabStrip>
                        <FileTab>File</FileTab>
                        <HomeTab>Home</HomeTab>
                    </TabStrip>
                    <BackRibbon>
                        <Logo />
                        <ChevronUp>
                            <svg width="10" height="6" viewBox="0 0 10 6">
                                <path d="M1 5l4-4 4 4" fill="none" stroke="#888" />
                            </svg>
                        </ChevronUp>
                    </BackRibbon>
                    <StatusBar><Grip /></StatusBar>
                </Frame>
            </Window>
            <FunctionWindow />
            <MultiAddDialog />
            <Overlay width="1191" height="616" viewBox="0 0 1191 616">
                <circle cx="407.5" cy="412" r="14" fill="none" stroke="#e3000f" strokeWidth="2" />
                <polygon
                    fill="#ff0000"
                    shapeRendering="crispEdges"
                    points="242,531 369,432 363,427 391,420 377,443 372,437 248,535 243,535"
                />
            </Overlay>
        </Desktop>
    );
}
